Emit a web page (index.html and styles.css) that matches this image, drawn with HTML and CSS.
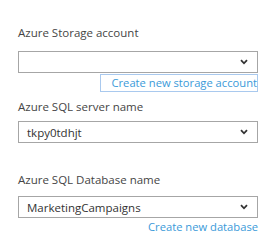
FILE: index.html
```html
<!DOCTYPE html>
<html lang="en">
<head>
    <meta charset="UTF-8">
    <title>Azure settings</title>
    <link rel="stylesheet" href="styles.css">
</head>
<body>
    <div class="panel">
        <div class="field">
            <div class="field-label">Azure Storage account</div>
            <div class="select">
                <span class="select-value"></span>
                <svg class="chevron" width="8" height="6" viewBox="0 0 8 6"><path d="M1 1.2 L4 4.3 L7 1.2" fill="none" stroke="#333" stroke-width="1.8"/></svg>
            </div>
            <div class="link-row">
                <a class="link focused" href="#">Create new storage account</a>
            </div>
        </div>

        <div class="field field-second">
            <div class="field-label">Azure SQL server name</div>
            <div class="select">
                <span class="select-value">tkpy0tdhjt</span>
                <svg class="chevron" width="8" height="6" viewBox="0 0 8 6"><path d="M1 1.2 L4 4.3 L7 1.2" fill="none" stroke="#333" stroke-width="1.8"/></svg>
            </div>
        </div>

        <div class="field field-third">
            <div class="field-label">Azure SQL Database name</div>
            <div class="select">
                <span class="select-value">MarketingCampaigns</span>
                <svg class="chevron" width="8" height="6" viewBox="0 0 8 6"><path d="M1 1.2 L4 4.3 L7 1.2" fill="none" stroke="#333" stroke-width="1.8"/></svg>
            </div>
            <div class="link-row">
                <a class="link" href="#">Create new database</a>
            </div>
        </div>
    </div>
</body>
</html>
```

FILE: styles.css
```css
body {
    margin: 0;
    background: #ffffff;
    font-family: "Open Sans", "Noto Sans", sans-serif;
    font-size: 11.5px;
    color: #454545;
}

.panel {
    width: 240px;
    padding: 25px 0 0 18px;
}

.field-label {
    line-height: 16px;
    margin-bottom: 10px;
}

.field-second {
    margin-top: 7px;
}

.field-second .field-label {
    margin-bottom: 6px;
}

.field-third {
    margin-top: 29px;
}

.field-third .field-label {
    margin-bottom: 8px;
}

.select {
    box-sizing: border-box;
    height: 22px;
    border: 1px solid #a6a6a6;
    padding: 0 9px 0 8px;
    display: flex;
    justify-content: space-between;
    align-items: center;
    color: #333333;
}

.chevron {
    display: block;
}

.link-row {
    display: flex;
    justify-content: flex-end;
    height: 18px;
    margin-top: 1px;
}

.link {
    color: #3a9ad9;
    text-decoration: none;
    line-height: 16px;
    font-size: 11.2px;
}

.link.focused {
    border: 1px solid #a9c9ee;
    padding: 0 0 0 11px;
}
```
